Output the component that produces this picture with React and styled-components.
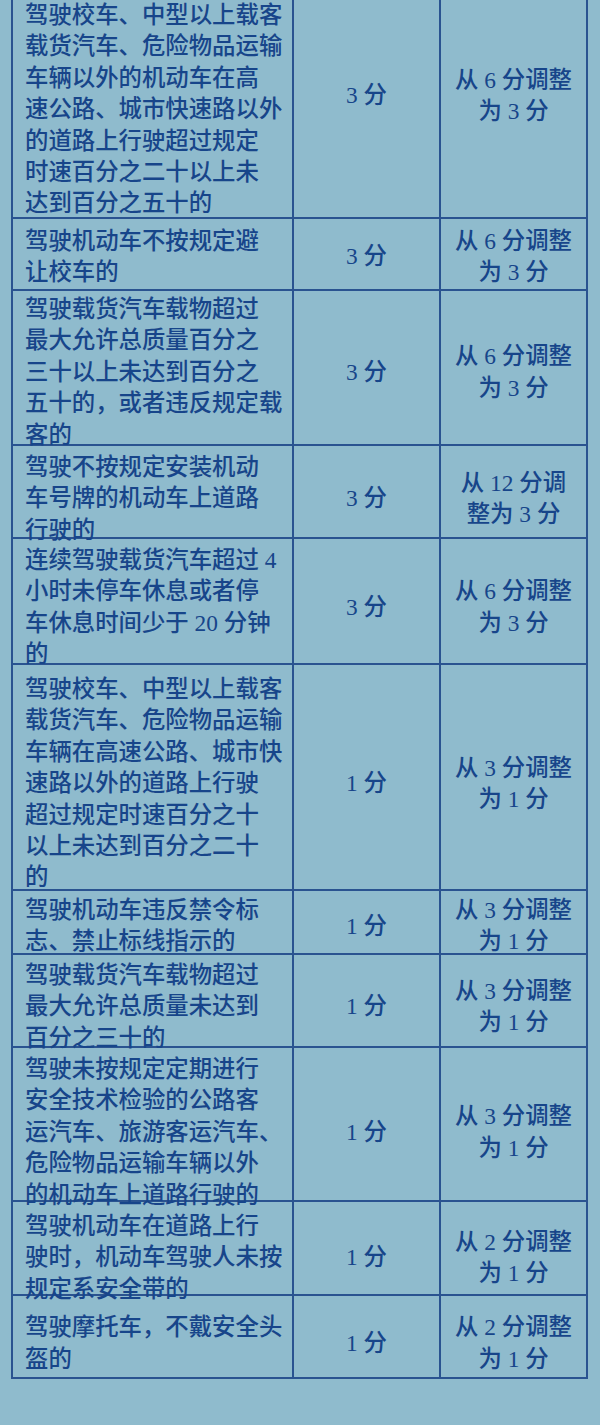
import React from "react";
import styled, { createGlobalStyle } from "styled-components";

const Global = createGlobalStyle`
  html, body {
    margin: 0;
    padding: 0;
    background: #8fbbcd;
  }
  * { box-sizing: border-box; }
`;

const LINE = "#2a5390";
const INK = "#17458a";

const Page = styled.div`
  width: 600px;
  min-height: 1425px;
  background: #8fbbcd;
  overflow: hidden;
  padding-bottom: 46px;
  font-family: "Liberation Serif", "Noto Sans CJK SC", serif;
  font-size: 23.4px;
  font-weight: 500;
  line-height: 31.4px;
  color: ${INK};
`;

const Table = styled.div`
  margin: ${(p) => p.$top}px 0 0 11px;
  width: 577px;
  border-left: 2px solid ${LINE};
`;

const Row = styled.div`
  display: grid;
  grid-template-columns: 281px 147px 147px;
  height: ${(p) => p.$h}px;
  border-bottom: 2px solid ${LINE};
`;

const Cell = styled.div`
  display: flex;
  flex-direction: column;
  justify-content: center;
  align-items: ${(p) => (p.$left ? "flex-start" : "center")};
  padding: ${(p) => p.$pt}px 0 0 ${(p) => (p.$left ? "12px" : "0")};
  border-right: 2px solid ${LINE};
  text-align: ${(p) => (p.$left ? "left" : "center")};
`;

const Line = styled.span`
  display: block;
  white-space: nowrap;
`;

const rows = [
  {
    h: 254,
    pt: 7,
    ptLeft: 35,
    left: [
      "驾驶校车、中型以上载客",
      "载货汽车、危险物品运输",
      "车辆以外的机动车在高",
      "速公路、城市快速路以外",
      "的道路上行驶超过规定",
      "时速百分之二十以上未",
      "达到百分之五十的",
    ],
    score: "3 分",
    change: ["从 6 分调整", "为 3 分"],
  },
  {
    h: 72,
    pt: 6,
    left: ["驾驶机动车不按规定避", "让校车的"],
    score: "3 分",
    change: ["从 6 分调整", "为 3 分"],
  },
  {
    h: 155,
    pt: 3,
    left: [
      "驾驶载货汽车载物超过",
      "最大允许总质量百分之",
      "三十以上未达到百分之",
      "五十的，或者违反规定载",
      "客的",
    ],
    score: "3 分",
    change: ["从 6 分调整", "为 3 分"],
  },
  {
    h: 93,
    pt: 6,
    left: ["驾驶不按规定安装机动", "车号牌的机动车上道路", "行驶的"],
    score: "3 分",
    change: ["从 12 分调", "整为 3 分"],
  },
  {
    h: 126,
    pt: 6,
    left: [
      "连续驾驶载货汽车超过 4",
      "小时未停车休息或者停",
      "车休息时间少于 20 分钟",
      "的",
    ],
    score: "3 分",
    change: ["从 6 分调整", "为 3 分"],
  },
  {
    h: 226,
    pt: 9,
    left: [
      "驾驶校车、中型以上载客",
      "载货汽车、危险物品运输",
      "车辆在高速公路、城市快",
      "速路以外的道路上行驶",
      "超过规定时速百分之十",
      "以上未达到百分之二十",
      "的",
    ],
    score: "1 分",
    change: ["从 3 分调整", "为 1 分"],
  },
  {
    h: 64,
    pt: 4,
    left: ["驾驶机动车违反禁令标", "志、禁止标线指示的"],
    score: "1 分",
    change: ["从 3 分调整", "为 1 分"],
  },
  {
    h: 93,
    pt: 5,
    left: ["驾驶载货汽车载物超过", "最大允许总质量未达到", "百分之三十的"],
    score: "1 分",
    change: ["从 3 分调整", "为 1 分"],
  },
  {
    h: 154,
    pt: 6,
    left: [
      "驾驶未按规定定期进行",
      "安全技术检验的公路客",
      "运汽车、旅游客运汽车、",
      "危险物品运输车辆以外",
      "的机动车上道路行驶的",
    ],
    score: "1 分",
    change: ["从 3 分调整", "为 1 分"],
  },
  {
    h: 94,
    pt: 9,
    left: ["驾驶机动车在道路上行", "驶时，机动车驾驶人未按", "规定系安全带的"],
    score: "1 分",
    change: ["从 2 分调整", "为 1 分"],
  },
  {
    h: 83,
    pt: 14,
    left: ["驾驶摩托车，不戴安全头", "盔的"],
    score: "1 分",
    change: ["从 2 分调整", "为 1 分"],
  },
];

export default function App() {
  return (
    <Page>
      <Global />
      <Table $top={-35}>
        {rows.map((r, i) => (
          <Row key={i} $h={r.h}>
            <Cell $left $pt={r.ptLeft ?? r.pt}>
              {r.left.map((t, j) => (
                <Line key={j}>{t}</Line>
              ))}
            </Cell>
            <Cell $pt={r.pt}>
              <Line>{r.score}</Line>
            </Cell>
            <Cell $pt={r.pt}>
              {r.change.map((t, j) => (
                <Line key={j}>{t}</Line>
              ))}
            </Cell>
          </Row>
        ))}
      </Table>
    </Page>
  );
}
